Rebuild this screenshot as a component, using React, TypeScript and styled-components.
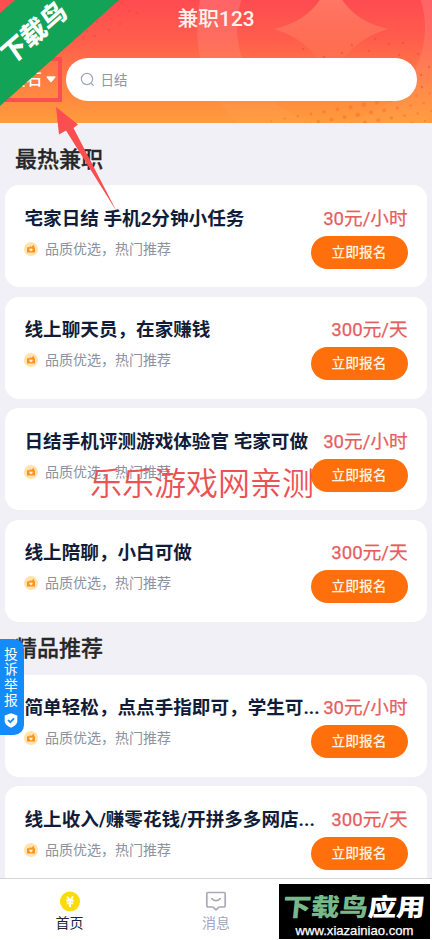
import React from "react";
import styled, { createGlobalStyle } from "styled-components";

const GlobalStyle = createGlobalStyle`
  * { box-sizing: border-box; }
  body {
    margin: 0;
    background: #f0f0f6;
    font-family: Roboto, "Noto Sans CJK SC", sans-serif;
  }
`;

const Page = styled.div`
  position: relative;
  display: flex;
  flex-direction: column;
  width: 432px;
  height: 940px;
  overflow: hidden;
  background: #f0f0f6;
`;

const Header = styled.header`
  position: relative;
  flex: none;
  height: 123px;
  overflow: hidden;
  background: linear-gradient(180deg, #ff4b50 0%, #ff5d4c 32%, #ff8242 70%, #ff9c3b 100%);
`;

const HeaderArt = styled.svg`
  position: absolute;
  inset: 0;
`;

const PageTitle = styled.h1`
  position: relative;
  margin: 0;
  height: 58px;
  padding-top: 5px;
  color: #fff3ee;
  font-size: 20.8px;
  font-weight: 500;
  line-height: 29px;
  text-align: center;
`;

const SearchRow = styled.div`
  position: relative;
  display: flex;
  align-items: center;
  height: 43px;
  padding-right: 15px;
`;

const City = styled.div`
  display: flex;
  flex: none;
  align-items: center;
  gap: 4px;
  width: 66px;
  padding-left: 10px;
  color: #fff;
  font-size: 16px;
  font-weight: 500;
  line-height: 24px;
`;

const SearchBox = styled.div`
  display: flex;
  flex: 1;
  align-items: center;
  gap: 5.5px;
  height: 43px;
  padding-left: 14px;
  border-radius: 22px;
  background: #fff;
  color: #8f95a6;
  font-size: 13.5px;
  line-height: 20px;
`;

const Content = styled.main`
  display: flex;
  flex: 1;
  flex-direction: column;
  min-height: 0;
  padding: 0 5px;
  overflow: hidden;
`;

const SectionTitle = styled.h2<{ $height: number; $top: number }>`
  flex: none;
  height: ${(p) => p.$height}px;
  margin: 0;
  padding: ${(p) => p.$top}px 0 0 10px;
  color: #272727;
  font-size: 22px;
  font-weight: 500;
  line-height: 32px;
  -webkit-text-stroke: 0.3px #272727;
`;

const CardList = styled.div`
  display: flex;
  flex: none;
  flex-direction: column;
  gap: 9.4px;
`;

const Card = styled.article`
  display: grid;
  flex: none;
  grid-template-columns: 1fr auto;
  grid-template-rows: 30px 34px;
  row-gap: 2px;
  height: 102px;
  padding: 18.6px 19.5px 0;
  border-radius: 14px;
  background: #fff;
`;

const JobTitle = styled.h3`
  min-width: 0;
  margin: 0;
  color: #111d38;
  font-size: 18.6px;
  font-weight: 700;
  line-height: 30px;
  white-space: nowrap;
`;

const Price = styled.div`
  color: #e65d60;
  font-size: 18.6px;
  line-height: 30px;
  text-align: right;
  white-space: nowrap;
  -webkit-text-stroke: 0.25px #e65d60;
`;

const Note = styled.div`
  display: flex;
  align-items: center;
  gap: 7px;
  height: 26px;
  margin-left: -0.6px;
  color: #8b92a0;
  font-size: 14px;
  line-height: 20px;
`;

const ApplyButton = styled.button`
  justify-self: end;
  width: 97px;
  height: 33px;
  padding: 0;
  border: 0;
  border-radius: 17px;
  background: #ff700d;
  color: #fff4e4;
  font: 500 13.8px/33px Roboto, "Noto Sans CJK SC", sans-serif;
`;

const TabBar = styled.nav`
  display: grid;
  flex: none;
  grid-template-columns: 139px 154px 139px;
  height: 62px;
  border-top: 1px solid #d5d5d7;
  background: #fff;
`;

const Tab = styled.div<{ $active?: boolean }>`
  display: flex;
  flex-direction: column;
  align-items: center;
  padding-top: 11px;
  color: ${(p) => (p.$active ? "#202738" : "#a4a4bd")};
  font-size: 14px;
  line-height: 20px;

  svg { margin-bottom: 1px; }
`;

const Ribbon = styled.div`
  position: absolute;
  top: 0;
  left: 0;
  width: 119px;
  height: 106px;
  background: #12a357;
  clip-path: polygon(0 13px, 15px 0, 119px 0, 0 106px);
`;

const RibbonText = styled.span`
  position: absolute;
  top: 13px;
  left: -16px;
  width: 100px;
  color: #fff;
  font-size: 26px;
  font-weight: 900;
  line-height: 40px;
  text-align: center;
  white-space: nowrap;
  transform: rotate(-41deg) skewX(-6deg);
`;

const Highlight = styled.div`
  position: absolute;
  top: 57px;
  left: -4px;
  width: 66px;
  height: 45px;
  border: 4px solid #fb4e50;
`;

const Arrow = styled.svg`
  position: absolute;
  top: 100px;
  left: 48px;
`;

const OverlayText = styled.div`
  position: absolute;
  top: 461px;
  left: 90px;
  color: #ec5153;
  font-size: 32px;
  font-weight: 350;
  line-height: 46px;
  white-space: nowrap;
`;

const ReportTab = styled.aside`
  position: absolute;
  top: 639px;
  left: 0;
  display: flex;
  flex-direction: column;
  align-items: center;
  width: 24px;
  height: 96px;
  padding: 8px 2px 0 0;
  border-radius: 0 10px 10px 0;
  background: #138bfa;
  color: #fff;
  font-size: 13.8px;
  line-height: 15.3px;

  svg { margin-top: 5px; }
`;

const SiteBadge = styled.div`
  position: absolute;
  top: 884px;
  left: 279px;
  display: flex;
  flex-direction: column;
  align-items: center;
  width: 151px;
  height: 55px;
  background: #000;
  color: #fff;
`;

const SiteName = styled.div`
  height: 38px;
  font-size: 28.5px;
  font-weight: 900;
  line-height: 49px;
  white-space: nowrap;
  transform: scaleY(0.86) skewX(-5deg);

  span { color: #77b98b; }
`;

const SiteUrl = styled.div`
  font: 13.1px/18px "Liberation Sans", sans-serif;
  -webkit-text-stroke: 0.25px #fff;
`;

const dots = Array.from({ length: 5 }, (_, row) =>
  Array.from({ length: 14 }, (_, col) => ({
    x: 443 - col * 13.2 - row * 6,
    y: 91 + row * 10 + col * 2.3,
    r: Math.max(0.5, 2.3 - Math.abs(col - 6) * 0.22),
  })),
).flat();

const specks = [
  [303, 49], [324, 57], [342, 53], [352, 45], [369, 51], [389, 44],
  [403, 43], [375, 39], [418, 54], [399, 55], [421, 75], [429, 67],
  [422, 87], [122, 3], [129, 11], [137, 13], [97, 22], [111, 19],
  [83, 38], [95, 36], [109, 30], [120, 24], [87, 31],
];

const HeaderBackground = () => (
  <HeaderArt width="432" height="123" viewBox="0 0 432 123">
    <defs>
      <linearGradient id="star" x1="0" y1="0" x2="0" y2="1">
        <stop offset=".25" stopColor="#ff7765" />
        <stop offset="1" stopColor="#ff7048" stopOpacity=".4" />
      </linearGradient>
      <linearGradient id="ring" x1="0" y1="-106" x2="0" y2="123" gradientUnits="userSpaceOnUse">
        <stop offset=".45" stopColor="#fff" stopOpacity=".14" />
        <stop offset="1" stopColor="#fff" stopOpacity=".02" />
      </linearGradient>
    </defs>
    <circle cx="331" cy="28" r="114" fill="none" stroke="url(#ring)" strokeWidth="40" />
    <path d="M331-30Q339 18 388 29Q343 42 331 86Q318 42 274 29Q323 18 331-30Z" fill="url(#star)" />
    {dots.map((d, i) => <circle key={i} cx={d.x} cy={d.y} r={d.r} fill="#f97432" opacity=".65" />)}
    {specks.map(([x, y]) => <circle key={`${x}-${y}`} cx={x} cy={y} r="1.2" fill="#ed4938" opacity=".55" />)}
  </HeaderArt>
);

const NoteIcon = () => (
  <svg width="14" height="14" viewBox="0 0 14 14">
    <circle cx="7" cy="7" r="7" fill="#ffe2ae" />
    <path d="M3 5.3h2.6L6 4l1.5 1 1.7-2 1.2.7-.6 1.6H11v5.2H3Z" fill="#ff9416" />
    <path d="M7 9.6 5.4 8V6.8l1-.2.6.5.6-.5 1 .2V8Z" fill="#fff6e8" />
  </svg>
);

const Job = ({ title, price }: { title: string; price: string }) => (
  <Card>
    <JobTitle>{title}</JobTitle>
    <Price>{price}</Price>
    <Note><NoteIcon />品质优选，热门推荐</Note>
    <ApplyButton>立即报名</ApplyButton>
  </Card>
);

const hotJobs = [
  { title: "宅家日结 手机2分钟小任务", price: "30元/小时" },
  { title: "线上聊天员，在家赚钱", price: "300元/天" },
  { title: "日结手机评测游戏体验官 宅家可做", price: "30元/小时" },
  { title: "线上陪聊，小白可做", price: "300元/天" },
];

const featuredJobs = [
  { title: "简单轻松，点点手指即可，学生可...", price: "30元/小时" },
  { title: "线上收入/赚零花钱/开拼多多网店...", price: "300元/天" },
];

export default function App() {
  return (
    <>
      <GlobalStyle />
      <Page>
        <Header>
          <HeaderBackground />
          <PageTitle>兼职123</PageTitle>
          <SearchRow>
            <City>
              黄石
              <svg width="10" height="7" viewBox="0 0 10 7">
                <path d="M1.2 1h7.6L5 5.6Z" fill="#fff" stroke="#fff" strokeWidth="1.4" strokeLinejoin="round" />
              </svg>
            </City>
            <SearchBox>
              <svg width="15" height="15" viewBox="0 0 15 15" fill="none" stroke="#a0a7b4" strokeWidth="1.2" strokeLinecap="round">
                <circle cx="7" cy="7" r="5.6" />
                <path d="m11.3 11.3 2 2" />
              </svg>
              日结
            </SearchBox>
          </SearchRow>
        </Header>

        <Content>
          <SectionTitle $height={62.4} $top={20.5}>最热兼职</SectionTitle>
          <CardList>{hotJobs.map((job) => <Job key={job.title} {...job} />)}</CardList>
          <SectionTitle $height={53} $top={11}>精品推荐</SectionTitle>
          <CardList>{featuredJobs.map((job) => <Job key={job.title} {...job} />)}</CardList>
        </Content>

        <TabBar>
          <Tab $active>
            <svg width="22" height="22" viewBox="0 0 22 22">
              <circle cx="11" cy="11.5" r="10" fill="#fddb08" />
              <path d="m8 6.5 3 4 3-4M7.3 10.5h7.4M7.8 13.2h6.4M11 10.5V17" fill="none" stroke="#fff" strokeWidth="2" />
            </svg>
            首页
          </Tab>
          <Tab>
            <svg width="22" height="22" viewBox="0 0 22 22" fill="none" stroke="#a9a9b9" strokeWidth="1.7" strokeLinejoin="round" strokeLinecap="round">
              <path d="M3 2.5h16q1.2 0 1.2 1.2v12.1q0 1.2-1.2 1.2h-5L11 19.8 8 17H3q-1.2 0-1.2-1.2V3.7Q1.8 2.5 3 2.5Z" />
              <path d="M6.8 8.6q4.2 4.2 8.4 0" />
            </svg>
            消息
          </Tab>
        </TabBar>

        <Highlight />
        <Ribbon><RibbonText>下载鸟</RibbonText></Ribbon>
        <Arrow width="75" height="115" viewBox="0 0 75 115">
          <path d="M8 7 30 24.5 25.5 28 69 112 18 30.5 11 34.5Z" fill="#fb4e50" />
        </Arrow>
        <OverlayText>乐乐游戏网亲测</OverlayText>
        <ReportTab>
          <span>投</span><span>诉</span><span>举</span><span>报</span>
          <svg width="14" height="15" viewBox="0 0 14 15">
            <path d="M7 .3 13.3 2.6v5.6q0 3.8-6.3 6.5Q.7 12 .7 8.2V2.6Z" fill="#fff" />
            <path d="m4 7 2.3 2.2L10 5.4" fill="none" stroke="#138bfa" strokeWidth="1.7" />
          </svg>
        </ReportTab>
        <SiteBadge>
          <SiteName><span>下载鸟</span>应用</SiteName>
          <SiteUrl>www.xiazainiao.com</SiteUrl>
        </SiteBadge>
      </Page>
    </>
  );
}
